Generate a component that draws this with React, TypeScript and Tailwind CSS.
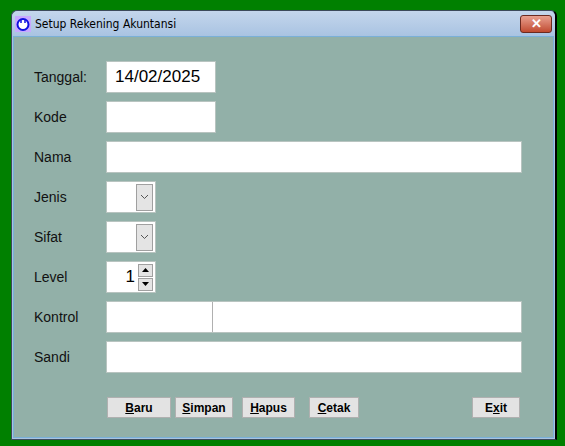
export default function App() {
  const rows: [string, JSX.Element][] = [];
  const box = "bg-white border border-[#b8c4c0] h-[32px]";
  const combo = (
    <div className={`${box} w-[50px] flex justify-end items-center pr-[2px]`}>
      <div className="w-[17px] h-[27px] bg-[#e4e4e4] border border-[#a0a0a0] flex items-center justify-center">
        <svg width="9" height="6" viewBox="0 0 9 6"><path d="M1 1l3.5 3.5L8 1" fill="none" stroke="#555" strokeWidth="1" /></svg>
      </div>
    </div>
  );
  const Btn = ({ u, rest, w, pre = "" }: { u: string; rest: string; w: string; pre?: string }) => (
    <div className={`${w} h-[21px] bg-[#e3e3e3] border border-[#b0b0b0] flex items-center justify-center text-[12px] font-bold text-black`}>
      {pre}<span className="underline">{u}</span>{rest}
    </div>
  );
  return (
    <div className="w-[565px] h-[446px] bg-[#008000] pt-[10px] pl-[11px]" style={{ fontFamily: '"Liberation Sans", Arial, sans-serif' }}>
      <div className="w-[546px] h-[430px] bg-[#a9c4e0] border border-[#3c4a5a] rounded-t-[6px] flex flex-col border-r-2 border-r-black">
        <div className="h-[25px] flex items-center px-[3px] bg-gradient-to-b from-[#c4d6ec] to-[#a9c3e2] rounded-t-[6px]">
          <div className="w-[16px] h-[16px] bg-[#c8a8ff] flex items-center justify-center mr-[4px]">
            <svg width="14" height="14" viewBox="0 0 14 14"><circle cx="7" cy="7.5" r="5.5" fill="#fff" stroke="#1010e0" strokeWidth="2" /><path d="M5 3v3M9 3v3" stroke="#1010e0" strokeWidth="1.5" /></svg>
          </div>
          <span className="text-[12px] text-black" style={{ fontFamily: '"DejaVu Sans Condensed", "Liberation Sans", sans-serif' }}>Setup Rekening Akuntansi</span>
          <div className="ml-auto w-[32px] h-[18px] rounded-[3px] border border-[#6b2a20] bg-gradient-to-b from-[#e8a090] to-[#c04a30] flex items-center justify-center">
            <span className="text-white font-bold text-[13px] leading-none">✕</span>
          </div>
        </div>
        <div className="flex-1 bg-[#92b0a8] mx-[1px] mb-[1px] border border-[#7ab0d8] pt-[24px] pl-[20px] flex flex-col gap-[8px] text-[14px] text-[#111]">
          {[
            ["Tanggal:", <div className={`${box} w-[110px] flex items-center pl-[8px] text-[17px] text-black`}>14/02/2025</div>],
            ["Kode", <div className={`${box} w-[110px]`} />],
            ["Nama", <div className={`${box} w-[416px]`} />],
            ["Jenis", combo],
            ["Sifat", combo],
            ["Level", (
              <div className={`${box} w-[50px] flex items-center justify-end pr-[2px]`}>
                <span className="text-[17px] text-black mr-[3px]">1</span>
                <div className="flex flex-col w-[15px] gap-[1px]">
                  <div className="h-[13px] bg-[#e4e4e4] border border-[#a0a0a0] flex items-center justify-center"><svg width="7" height="4" viewBox="0 0 7 4"><path d="M0 4L3.5 0L7 4z" fill="#000" /></svg></div>
                  <div className="h-[13px] bg-[#e4e4e4] border border-[#a0a0a0] flex items-center justify-center"><svg width="7" height="4" viewBox="0 0 7 4"><path d="M0 0L3.5 4L7 0z" fill="#000" /></svg></div>
                </div>
              </div>
            )],
            ["Kontrol", (
              <div className={`${box} w-[416px] flex`}>
                <div className="w-[106px] border-r border-[#b0b0b0]" />
              </div>
            )],
            ["Sandi", <div className={`${box} w-[416px]`} />],
          ].map(([l, c], i) => (
            <div key={i} className="flex items-center h-[32px]">
              <div className="w-[72px]">{l as string}</div>
              {c as JSX.Element}
            </div>
          ))}
          <div className="flex items-center mt-[16px] pl-[73px]">
            <Btn u="B" rest="aru" w="w-[64px]" />
            <div className="w-[4px]" />
            <Btn u="S" rest="impan" w="w-[58px]" />
            <div className="w-[9px]" />
            <Btn u="H" rest="apus" w="w-[53px]" />
            <div className="w-[14px]" />
            <Btn u="C" rest="etak" w="w-[50px]" />
            <div className="w-[113px]" />
            <Btn pre="E" u="x" rest="it" w="w-[48px]" />
          </div>
        </div>
      </div>
    </div>
  );
}
